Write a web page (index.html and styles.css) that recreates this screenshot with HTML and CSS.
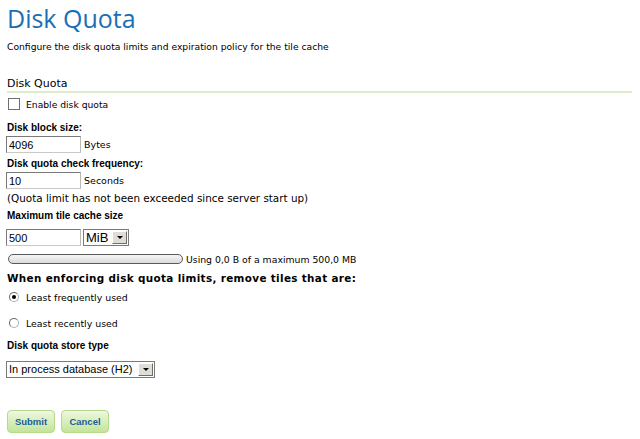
FILE: index.html
```html
<!DOCTYPE html>
<html>
<head>
<meta charset="utf-8">
<link rel="stylesheet" href="styles.css">
</head>
<body>
<div class="page">
  <h1 class="title">Disk Quota</h1>
  <p class="desc">Configure the disk quota limits and expiration policy for the tile cache</p>

  <h2 class="section">Disk Quota</h2>

  <label class="check-row"><input type="checkbox" class="chk"><span>Enable disk quota</span></label>

  <div class="field f1">
    <div class="lbl">Disk block size:</div>
    <div class="row r-a"><input class="txt" type="text" value="4096"><span class="unit">Bytes</span></div>
  </div>

  <div class="field f2">
    <div class="lbl">Disk quota check frequency:</div>
    <div class="row r-b"><input class="txt" type="text" value="10"><span class="unit">Seconds</span></div>
    <div class="note">(Quota limit has not been exceeded since server start up)</div>
  </div>

  <div class="field f3">
    <div class="lbl">Maximum tile cache size</div>
    <div class="row r-c">
      <input class="txt" type="text" value="500">
      <div class="sel sel-unit"><span class="sel-text">MiB</span><span class="arrow"><span class="tri"></span></span></div>
    </div>
    <div class="usage"><div class="bar"></div><span>Using 0,0 B of a maximum 500,0 MB</span></div>
  </div>

  <div class="field f4">
    <div class="lbl lbl-wide">When enforcing disk quota limits, remove tiles that are:</div>
    <label class="radio-row rr1"><input type="radio" name="pol" class="rad" checked><span>Least frequently used</span></label>
    <label class="radio-row rr2"><input type="radio" name="pol" class="rad"><span>Least recently used</span></label>
  </div>

  <div class="field f5">
    <div class="lbl">Disk quota store type</div>
    <div class="sel sel-store"><span class="sel-text">In process database (H2)</span><span class="arrow"><span class="tri"></span></span></div>
  </div>

  <div class="buttons">
    <button class="btn">Submit</button>
    <button class="btn">Cancel</button>
  </div>
</div>
</body>
</html>
```

FILE: styles.css
```css
html, body {
  margin: 0;
  padding: 0;
  background: #ffffff;
}
body {
  font-family: "DejaVu Sans", Verdana, sans-serif;
  font-size: 9.5px;
  color: #000;
}
.page {
  padding: 4px 7px 0 7px;
}
.title {
  margin: 0;
  font-family: "Open Sans", sans-serif;
  font-weight: 400;
  font-size: 25px;
  line-height: 28px;
  color: #1a6fb4;
}
.desc {
  margin: 8px 0 0 0;
  font-size: 9.2px;
  line-height: 14px;
}
.section {
  margin: 22px 0 0 0;
  font-weight: 400;
  font-size: 11px;
  line-height: 15px;
  border-bottom: 2px solid #dcedc8;
  width: 625px;
}
.check-row {
  display: flex;
  align-items: center;
  gap: 6px;
  margin-top: 4px;
  height: 14px;
  font-size: 9.2px;
}
.chk {
  appearance: none;
  -webkit-appearance: none;
  margin: 0 0 0 1px;
  width: 12px;
  height: 12px;
  border: 1px solid #6f6f6f;
  background: #fff;
  box-sizing: border-box;
}
.lbl {
  font-family: "Liberation Sans", Arial, sans-serif;
  font-weight: 700;
  font-size: 10px;
  line-height: 12px;
}
.lbl-wide {
  font-family: "DejaVu Sans", Verdana, sans-serif;
  font-size: 10.4px;
  letter-spacing: 0.35px;
  line-height: 13px;
}
.f1 { margin-top: 11px; }
.f2 { margin-top: 5px; }
.f3 { margin-top: 5px; }
.f4 { margin-top: 7px; }
.f5 { margin-top: 10px; }
.row {
  display: flex;
  align-items: center;
  margin-left: -1px;
}
.r-a { margin-top: 2px; }
.r-b { margin-top: 2px; }
.r-c { margin-top: 7px; gap: 2px; }
.txt {
  box-sizing: border-box;
  width: 75px;
  height: 17px;
  margin: 0;
  padding: 1px 2px;
  border: 1px solid #8a8a8a;
  border-top-color: #7a7a7a;
  border-left-color: #7a7a7a;
  border-right-color: #b9b9b9;
  border-bottom-color: #c9c9c9;
  font-family: "Liberation Sans", Arial, sans-serif;
  font-size: 11px;
  color: #000;
  background: #fff;
}
.unit {
  margin-left: 3px;
}
.note {
  margin-top: 2px;
  font-size: 10.4px;
  line-height: 14px;
}
.sel {
  box-sizing: border-box;
  display: flex;
  align-items: center;
  height: 17px;
  border: 1px solid #7a7a7a;
  background: #fff;
  font-family: "Liberation Sans", Arial, sans-serif;
  white-space: nowrap;
}
.sel-text {
  padding: 0 2px;
  flex: 1;
  line-height: 15px;
}
.sel-unit {
  width: 46px;
  font-size: 13px;
}
.sel-store {
  margin-top: 9px;
  margin-left: -1px;
  width: 149px;
  font-size: 11px;
}
.arrow {
  width: 15px;
  height: 13px;
  margin-right: 1px;
  box-sizing: border-box;
  background: #e0ddd6;
  border-top: 1px solid #fff;
  border-left: 1px solid #fff;
  border-right: 1px solid #6e6e6e;
  border-bottom: 1px solid #6e6e6e;
  display: flex;
  align-items: center;
  justify-content: center;
}
.tri {
  width: 0;
  height: 0;
  border-left: 3px solid transparent;
  border-right: 3px solid transparent;
  border-top: 3px solid #000;
}
.usage {
  display: flex;
  align-items: center;
  margin-top: 7px;
  margin-left: 1px;
  height: 12px;
  font-size: 9.3px;
}
.bar {
  box-sizing: border-box;
  width: 175px;
  height: 10px;
  border: 1px solid #5a5a5a;
  border-radius: 5px;
  background: linear-gradient(#f6f6f6, #dadada);
  margin-right: 3px;
}
.radio-row {
  display: flex;
  align-items: center;
  gap: 7px;
  height: 14px;
  margin-left: 2px;
  font-size: 9.4px;
}
.rr1 { margin-top: 5px; }
.rr2 { margin-top: 12px; }
.rad {
  appearance: none;
  -webkit-appearance: none;
  margin: 0;
  width: 10px;
  height: 10px;
  border-radius: 50%;
  border: 1px solid #b0b0b0;
  border-top-color: #6a6a6a;
  border-left-color: #6a6a6a;
  background: #fff;
  box-sizing: border-box;
  position: relative;
}
.rad:checked::after {
  content: "";
  position: absolute;
  left: 2px;
  top: 2px;
  width: 4px;
  height: 4px;
  border-radius: 50%;
  background: #000;
}
.buttons {
  display: flex;
  gap: 6px;
  margin-top: 32px;
}
.btn {
  box-sizing: border-box;
  width: 48px;
  height: 23px;
  padding: 0;
  border: 1px solid #b4d98a;
  border-radius: 4px;
  background: linear-gradient(#eef8e0, #d4edb4 60%, #c2e49a);
  color: #1b5c9a;
  font-family: "Liberation Sans", Arial, sans-serif;
  font-weight: 700;
  font-size: 9.5px;
}
```
